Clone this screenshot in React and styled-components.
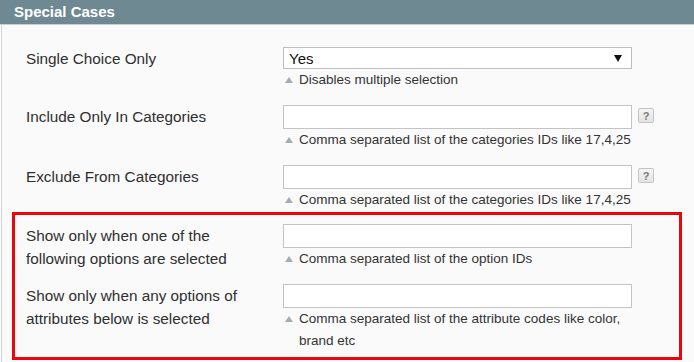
import styled, { createGlobalStyle } from "styled-components";

const GlobalStyle = createGlobalStyle`
  html, body {
    margin: 0;
    padding: 0;
    background: #ffffff;
  }
  body {
    font-family: "Liberation Sans", Arial, sans-serif;
  }
`;

const rows = [
  {
    label: "Single Choice Only",
    type: "select",
    value: "Yes",
    note: "Disables multiple selection",
  },
  {
    label: "Include Only In Categories",
    help: true,
    note: "Comma separated list of the categories IDs like 17,4,25",
  },
  {
    label: "Exclude From Categories",
    help: true,
    note: "Comma separated list of the categories IDs like 17,4,25",
  },
];

const highlighted = [
  {
    label: "Show only when one of the following options are selected",
    note: "Comma separated list of the option IDs",
  },
  {
    label: "Show only when any options of attributes below is selected",
    note: "Comma separated list of the attribute codes like color, brand etc",
  },
];

const Field = ({ row }) => (
  <Row>
    <Label>{row.label}</Label>
    <Value>
      <Control>
        {row.type === "select" ? (
          <SelectBox>
            <span>{row.value}</span>
            <svg width="8" height="7" viewBox="0 0 8 7">
              <path d="M0 0 H8 L4 7 Z" fill="#111" />
            </svg>
          </SelectBox>
        ) : (
          <TextInput type="text" />
        )}
        {row.help && <HelpButton>?</HelpButton>}
      </Control>
      <Note>
        <NoteArrow>
          <svg width="8" height="6" viewBox="0 0 8 6">
            <path d="M0 6 L4 0 L8 6 Z" fill="#a3adb4" />
          </svg>
        </NoteArrow>
        <span>{row.note}</span>
      </Note>
    </Value>
  </Row>
);

const App = () => {
  return (
    <Page>
      <GlobalStyle />
      <Head>Special Cases</Head>
      <Fieldset>
        {rows.map((row) => (
          <Field key={row.label} row={row} />
        ))}
        <Highlight>
          {highlighted.map((row) => (
            <Field key={row.label} row={row} />
          ))}
        </Highlight>
      </Fieldset>
    </Page>
  );
};

export default App;

const Page = styled.div`
  width: 694px;
  height: 362px;
  overflow: hidden;
  background: #ffffff;
`;

const Head = styled.div`
  height: 24px;
  line-height: 24px;
  padding: 0 14px;
  background: #6f8992;
  border-bottom: 1px solid #c7d1d5;
  color: #ffffff;
  font-size: 15px;
  font-weight: bold;
`;

const Fieldset = styled.div`
  margin-left: 1px;
  border-left: 1px solid #d3d3d3;
  background: #fafafa;
  padding: 22px 12px 10px 10px;
  height: 100%;
`;

const Row = styled.div`
  display: grid;
  grid-template-columns: 257px 1fr;
  padding-left: 14px;

  & + & {
    margin-top: 14px;
  }
`;

const Label = styled.div`
  color: #2f2f2f;
  font-size: 15.3px;
  line-height: 23px;
  padding-right: 20px;
`;

const Value = styled.div`
  display: flex;
  flex-direction: column;
`;

const Control = styled.div`
  display: flex;
  align-items: center;
  gap: 6px;
`;

const SelectBox = styled.div`
  box-sizing: border-box;
  width: 349px;
  height: 22px;
  display: flex;
  align-items: center;
  justify-content: space-between;
  padding: 0 9px 0 5px;
  background: #ffffff;
  border: 1px solid #bdbdbd;
  color: #111;
  font-size: 15px;
`;

const TextInput = styled.input`
  box-sizing: border-box;
  width: 349px;
  height: 24px;
  margin: 0;
  padding: 0 5px;
  background: #ffffff;
  border: 1px solid #c4c4c4;
  outline: none;
  font-family: inherit;
`;

const HelpButton = styled.span`
  box-sizing: border-box;
  width: 16px;
  height: 15px;
  margin-top: -3px;
  display: flex;
  align-items: center;
  justify-content: center;
  border: 1px solid #c4c4c4;
  border-radius: 2px;
  background: linear-gradient(#f4f4f4, #e4e4e4);
  color: #7a7a7a;
  font-size: 11px;
  font-weight: bold;
`;

const Note = styled.div`
  display: flex;
  width: 349px;
  color: #333;
  font-size: 13.5px;
  line-height: 22px;
`;

const NoteArrow = styled.span`
  flex: 0 0 16px;
  display: flex;
  align-items: flex-start;
  padding: 8px 0 0 2px;
  box-sizing: border-box;
  height: 22px;
`;

const Highlight = styled.div`
  margin-top: 1px;
  border: 3px solid #e8050c;
  padding: 9px 0 5px;

  ${Row} {
    padding-left: 11px;
  }
`;
